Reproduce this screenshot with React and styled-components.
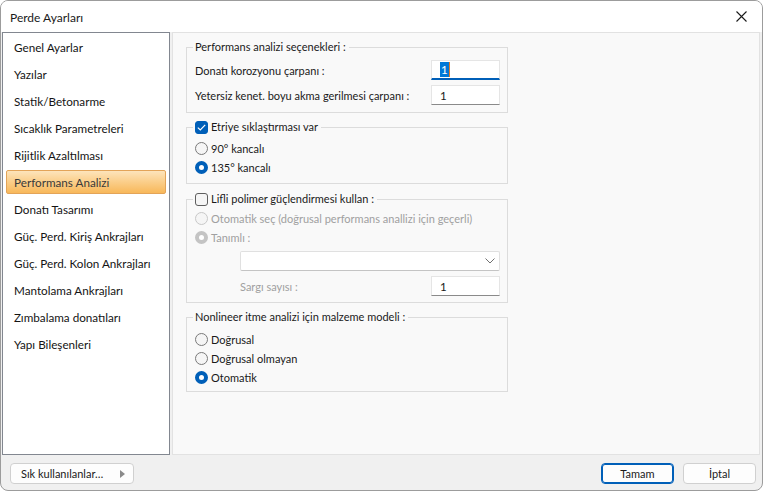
import React, { useState } from "react";
import styled, { createGlobalStyle, css } from "styled-components";

const GlobalStyle = createGlobalStyle`
  html, body {
    margin: 0;
    padding: 0;
    background: #ffffff;
  }
  * {
    box-sizing: border-box;
  }
  body {
    font-family: Lato, "Noto Sans", sans-serif;
    font-size: 11px;
    color: #1a1a1a;
  }
`;

const menuItems = [
  "Genel Ayarlar",
  "Yazılar",
  "Statik/Betonarme",
  "Sıcaklık Parametreleri",
  "Rijitlik Azaltılması",
  "Performans Analizi",
  "Donatı Tasarımı",
  "Güç. Perd. Kiriş Ankrajları",
  "Güç. Perd. Kolon Ankrajları",
  "Mantolama Ankrajları",
  "Zımbalama donatıları",
  "Yapı Bileşenleri",
];

export default function App() {
  const [selected, setSelected] = useState("Performans Analizi");
  const [etriye, setEtriye] = useState(true);
  const [kanca, setKanca] = useState("135");
  const [lifli, setLifli] = useState(false);
  const [model, setModel] = useState("oto");

  return (
    <>
      <GlobalStyle />
      <Window>
        <TitleBar>
          <Title>Perde Ayarları</Title>
          <CloseButton aria-label="Kapat">
            <svg width="11" height="11" viewBox="0 0 11 11">
              <path d="M0.5 0.5 L10.5 10.5 M10.5 0.5 L0.5 10.5" stroke="#1a1a1a" strokeWidth="1.1" />
            </svg>
          </CloseButton>
        </TitleBar>

        <Body>
          <Sidebar>
            {menuItems.map((item) => (
              <MenuItem
                key={item}
                $active={item === selected}
                onClick={() => setSelected(item)}
              >
                {item}
              </MenuItem>
            ))}
          </Sidebar>

          <Panel>
            <Group>
              <Legend>Performans analizi seçenekleri :</Legend>
              <FieldRow $top={5}>
                <span>Donatı korozyonu çarpanı :</span>
                <TextBox $focused>
                  <Selection>1</Selection>
                </TextBox>
              </FieldRow>
              <FieldRow $top={5}>
                <span>Yetersiz kenet. boyu akma gerilmesi çarpanı :</span>
                <TextBox>1</TextBox>
              </FieldRow>
              <Spacer $h={7} />
            </Group>

            <Group $top={6}>
              <Legend>
                <Check checked={etriye} onClick={() => setEtriye(!etriye)}>
                  Etriye sıklaştırması var
                </Check>
              </Legend>
              <Spacer $h={4} />
              <Radio checked={kanca === "90"} onClick={() => setKanca("90")}>
                90° kancalı
              </Radio>
              <Radio checked={kanca === "135"} onClick={() => setKanca("135")}>
                135° kancalı
              </Radio>
              <Spacer $h={6} />
            </Group>

            <Group $top={7}>
              <Legend>
                <Check checked={lifli} onClick={() => setLifli(!lifli)}>
                  Lifli polimer güçlendirmesi kullan :
                </Check>
              </Legend>
              <Spacer $h={2} />
              <Radio disabled>Otomatik seç (doğrusal performans anallizi için geçerli)</Radio>
              <Radio disabled checked>
                Tanımlı :
              </Radio>
              <Indent>
                <Combo>
                  <svg width="10" height="6" viewBox="0 0 10 6">
                    <path d="M0.5 0.5 L5 5 L9.5 0.5" fill="none" stroke="#707070" strokeWidth="1" />
                  </svg>
                </Combo>
                <FieldRow $top={5} $muted>
                  <span>Sargı sayısı :</span>
                  <TextBox>1</TextBox>
                </FieldRow>
              </Indent>
              <Spacer $h={6} />
            </Group>

            <Group $top={6}>
              <Legend>Nonlineer itme analizi için malzeme modeli :</Legend>
              <Spacer $h={5} />
              <Radio checked={model === "dog"} onClick={() => setModel("dog")}>
                Doğrusal
              </Radio>
              <Radio checked={model === "nl"} onClick={() => setModel("nl")}>
                Doğrusal olmayan
              </Radio>
              <Radio checked={model === "oto"} onClick={() => setModel("oto")}>
                Otomatik
              </Radio>
              <Spacer $h={4} />
            </Group>
          </Panel>
        </Body>

        <Footer>
          <Button $wide>
            <span>Sık kullanılanlar…</span>
            <svg width="5" height="8" viewBox="0 0 5 8">
              <path d="M0 0 L5 4 L0 8 Z" fill="#8a8a8a" />
            </svg>
          </Button>
          <FooterRight>
            <Button $primary>Tamam</Button>
            <Button>İptal</Button>
          </FooterRight>
        </Footer>
      </Window>
    </>
  );
}

function Check({ checked, children, onClick }) {
  return (
    <OptionLabel onClick={onClick}>
      <CheckBox $checked={checked}>
        {checked && (
          <svg width="9" height="7" viewBox="0 0 9 7">
            <path d="M0.8 3.6 L3.3 6 L8.2 0.8" fill="none" stroke="#ffffff" strokeWidth="1.2" />
          </svg>
        )}
      </CheckBox>
      <span>{children}</span>
    </OptionLabel>
  );
}

function Radio({ checked, disabled, children, onClick }) {
  return (
    <OptionRow $disabled={disabled} onClick={disabled ? undefined : onClick}>
      <RadioCircle $checked={checked} $disabled={disabled} />
      <span>{children}</span>
    </OptionRow>
  );
}

const Window = styled.div`
  width: 763px;
  height: 491px;
  border: 1px solid #9c9c9c;
  border-radius: 8px;
  overflow: hidden;
  background: #f0f0f0;
  display: flex;
  flex-direction: column;
  white-space: nowrap;
`;

const TitleBar = styled.div`
  height: 31px;
  flex: none;
  background: #ffffff;
  display: flex;
  align-items: center;
  justify-content: space-between;
  padding: 0 0 0 9px;
`;

const Title = styled.div`
  font-size: 12px;
  color: #1a1a1a;
  margin-top: 1px;
`;

const CloseButton = styled.button`
  width: 46px;
  height: 31px;
  border: none;
  background: transparent;
  display: flex;
  align-items: center;
  justify-content: center;
  padding: 0 0 0 4px;
`;

const Body = styled.div`
  height: 423px;
  flex: none;
  display: flex;
  gap: 2px;
  padding: 0 2px 0 1px;
`;

const Sidebar = styled.div`
  width: 168px;
  height: 423px;
  flex: none;
  background: #ffffff;
  border: 1px solid #828790;
  padding: 2px 3px;
  display: flex;
  flex-direction: column;
  gap: 3px;
`;

const MenuItem = styled.div`
  height: 24px;
  flex: none;
  display: flex;
  align-items: center;
  padding-left: 7px;
  border: 1px solid transparent;
  border-radius: 2px;
  font-size: 11.7px;
  color: #141414;
  cursor: default;
  ${(p) =>
    p.$active &&
    css`
      border-color: #e3a458;
      background: linear-gradient(to bottom, #fde4bb 0%, #fbd08e 45%, #f8b85a 100%);
      color: #3a3a3a;
    `}
`;

const Panel = styled.div`
  flex: 1;
  height: 423px;
  background: #f9f9f9;
  border: 1px solid #e2e2e2;
  padding: 6px 0 0 13px;
  display: flex;
  flex-direction: column;
`;

const Group = styled.fieldset`
  width: 322px;
  margin: ${(p) => p.$top || 0}px 0 0 0;
  padding: 0 7px 0 8px;
  border: 1px solid #dcdcdc;
  border-radius: 0;
  display: flex;
  flex-direction: column;
  min-width: 0;
`;

const Legend = styled.legend`
  height: 16px;
  line-height: 16px;
  padding: 0 3px 0 2px;
  margin-left: -2px;
  color: #1a1a1a;
  display: flex;
  align-items: center;
`;

const Spacer = styled.div`
  height: ${(p) => p.$h}px;
  flex: none;
`;

const FieldRow = styled.div`
  height: 20px;
  margin-top: ${(p) => p.$top || 0}px;
  display: flex;
  align-items: center;
  justify-content: space-between;
  color: ${(p) => (p.$muted ? "#a0a0a0" : "#1a1a1a")};
`;

const TextBox = styled.div`
  width: 69px;
  height: 20px;
  flex: none;
  background: #ffffff;
  border: 1px solid #e5e5e5;
  border-bottom: ${(p) => (p.$focused ? "2px solid #005fb8" : "1px solid #8a8a8a")};
  padding-left: 8px;
  display: flex;
  align-items: center;
  font-size: 11.5px;
  color: #1a1a1a;
`;

const Selection = styled.span`
  background: #0078d7;
  color: #ffffff;
  padding: 0 1px;
  line-height: 15px;
  border-right: 1px solid #e07a2a;
`;

const OptionLabel = styled.label`
  display: flex;
  align-items: center;
  gap: 3px;
  cursor: default;
`;

const OptionRow = styled.div`
  height: 19px;
  flex: none;
  display: flex;
  align-items: center;
  gap: 3px;
  color: ${(p) => (p.$disabled ? "#a0a0a0" : "#1a1a1a")};
  cursor: default;
`;

const CheckBox = styled.span`
  width: 13px;
  height: 13px;
  flex: none;
  border-radius: 3px;
  display: flex;
  align-items: center;
  justify-content: center;
  background: ${(p) => (p.$checked ? "#005fb8" : "#f5f5f5")};
  border: 1px solid ${(p) => (p.$checked ? "#005fb8" : "#5e5e5e")};
`;

const RadioCircle = styled.span`
  width: 13px;
  height: 13px;
  flex: none;
  border-radius: 50%;
  ${(p) =>
    p.$checked
      ? css`
          background: #ffffff;
          border: 4px solid ${p.$disabled ? "#c4c4c4" : "#005fb8"};
        `
      : css`
          background: #f5f5f5;
          border: 1px solid ${p.$disabled ? "#c8c8c8" : "#7a7a7a"};
        `}
`;

const Indent = styled.div`
  margin: 4px 0 0 45px;
  display: flex;
  flex-direction: column;
`;

const Combo = styled.div`
  height: 20px;
  background: #ffffff;
  border: 1px solid #e0e0e0;
  border-bottom-color: #c4c4c4;
  border-radius: 2px;
  display: flex;
  align-items: center;
  justify-content: flex-end;
  padding-right: 4px;
`;

const Footer = styled.div`
  flex: 1;
  display: flex;
  align-items: flex-start;
  justify-content: space-between;
  padding: 8px 6px 0 9px;
`;

const FooterRight = styled.div`
  display: flex;
  gap: 9px;
`;

const Button = styled.button`
  height: 21px;
  width: ${(p) => (p.$wide ? "124px" : "73px")};
  font-family: inherit;
  font-size: 11px;
  color: #1a1a1a;
  background: #fdfdfd;
  border: 1px solid ${(p) => (p.$primary ? "#005fb8" : "#d0d0d0")};
  box-shadow: ${(p) => (p.$primary ? "inset 0 0 0 1px #005fb8" : "none")};
  border-radius: 4px;
  display: flex;
  align-items: center;
  justify-content: ${(p) => (p.$wide ? "space-between" : "center")};
  padding: ${(p) => (p.$wide ? "0 8px 0 10px" : "0")};
`;
